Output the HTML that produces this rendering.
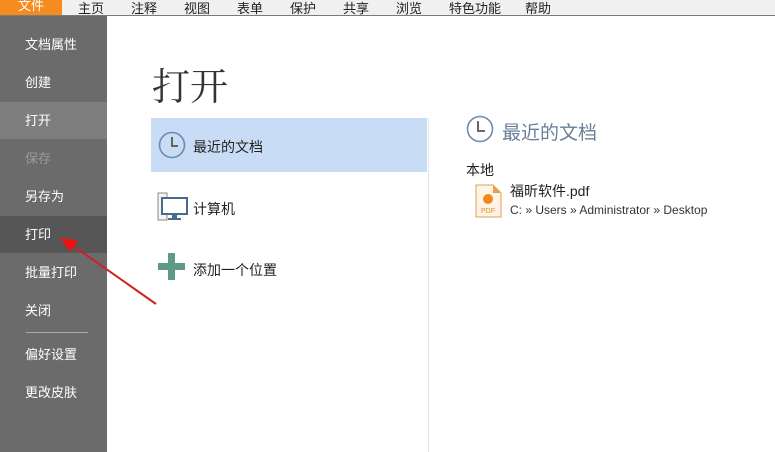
<!DOCTYPE html>
<html><head><meta charset="utf-8"><style>
*{margin:0;padding:0;box-sizing:border-box}
body{width:775px;height:452px;overflow:hidden;background:#fff;font-family:"Liberation Sans","Noto Sans CJK SC",sans-serif;position:relative}
.menu{position:absolute;left:0;top:0;width:775px;height:16px;background:#f0f0f0;border-bottom:1px solid #7a7a7a}
.menu span{position:absolute;top:-2px;font-size:13px;color:#222}
.menu .act{left:0;width:62px;height:15px;background:#f68b1f;color:#fff;text-align:center;top:0;line-height:12px}
.side{position:absolute;left:0;top:16px;width:107px;height:436px;background:#6b6b6b}
.side div{position:absolute;left:0;width:107px;height:37px;line-height:37px;padding-left:25px;color:#fff;font-size:13px}
.t{position:absolute;font-size:13px;color:#222}
</style></head><body>
<div class="menu">
<span class="act">文件</span>
<span style="left:78px">主页</span><span style="left:131px">注释</span><span style="left:184px">视图</span><span style="left:237px">表单</span><span style="left:290px">保护</span><span style="left:343px">共享</span><span style="left:396px">浏览</span><span style="left:449px">特色功能</span><span style="left:525px">帮助</span>
</div>
<div class="side">
<div style="top:10px">文档属性</div>
<div style="top:48px">创建</div>
<div style="top:86px;background:#7e7e7e">打开</div>
<div style="top:124px;color:#9a9a9a">保存</div>
<div style="top:162px">另存为</div>
<div style="top:200px;background:#565656">打印</div>
<div style="top:238px">批量打印</div>
<div style="top:276px">关闭</div>
<div style="top:316px;left:26px;width:62px;height:1px;background:#aaa;padding:0"></div>
<div style="top:320px">偏好设置</div>
<div style="top:358px">更改皮肤</div>
</div>
<div style="position:absolute;left:152px;top:56px;font-size:38px;color:#333;font-family:'Noto Serif CJK SC',serif">打开</div>
<div style="position:absolute;left:151px;top:118px;width:276px;height:54px;background:#c9dcf5"></div>
<div style="position:absolute;left:428px;top:118px;width:1px;height:334px;background:#e6e6e6"></div>
<svg style="position:absolute;left:157px;top:130px" width="30" height="30"><circle cx="15" cy="15" r="12.5" fill="none" stroke="#6a8cb0" stroke-width="1.6"/><path d="M15 7v9h6" fill="none" stroke="#555" stroke-width="1.8"/></svg>
<div class="t" style="left:193px;top:137px;font-size:14px">最近的文档</div>
<svg style="position:absolute;left:157px;top:192px" width="32" height="30"><rect x="1" y="1" width="9" height="27" fill="#f4f4f4" stroke="#888"/><rect x="5" y="6" width="25" height="16" fill="#fff" stroke="#4c6a8c" stroke-width="2"/><rect x="15" y="23" width="5" height="3" fill="#4c6a8c"/><rect x="11" y="26" width="13" height="2" fill="#4c6a8c"/></svg>
<div class="t" style="left:193px;top:199px;font-size:14px">计算机</div>
<svg style="position:absolute;left:158px;top:253px" width="28" height="28"><rect x="10" y="0" width="7" height="27" fill="#5f9a84"/><rect x="0" y="10" width="27" height="7" fill="#5f9a84"/></svg>
<div class="t" style="left:193px;top:260px;font-size:14px">添加一个位置</div>
<svg style="position:absolute;left:466px;top:114px" width="30" height="30"><circle cx="14" cy="15" r="12.5" fill="none" stroke="#6a8cb0" stroke-width="1.6"/><path d="M12 7v10h7" fill="none" stroke="#555" stroke-width="1.8"/></svg>
<div class="t" style="left:502px;top:118px;font-size:19px;color:#6a7f98">最近的文档</div>
<div class="t" style="left:466px;top:160px;font-size:14px">本地</div>
<svg style="position:absolute;left:475px;top:184px" width="28" height="34"><path d="M1 1h17l8 8v24H1z" fill="#fdf4e6" stroke="#e0a050"/><path d="M18 1v8h8" fill="#e8a050"/><circle cx="13" cy="15" r="5" fill="#f08a20"/><text x="6" y="29" font-size="7" fill="#e08a30" font-family="Liberation Sans">PDF</text></svg>
<div class="t" style="left:510px;top:181px;font-size:14px">福昕软件.pdf</div>
<div class="t" style="left:510px;top:203px;font-size:12px;color:#333">C: » Users » Administrator » Desktop</div>
<svg style="position:absolute;left:0;top:0" width="775" height="452"><line x1="156" y1="304" x2="72" y2="245" stroke="#d02020" stroke-width="2"/><path d="M60 238L78 240L70 252Z" fill="#ee1111"/></svg>
</body></html>
